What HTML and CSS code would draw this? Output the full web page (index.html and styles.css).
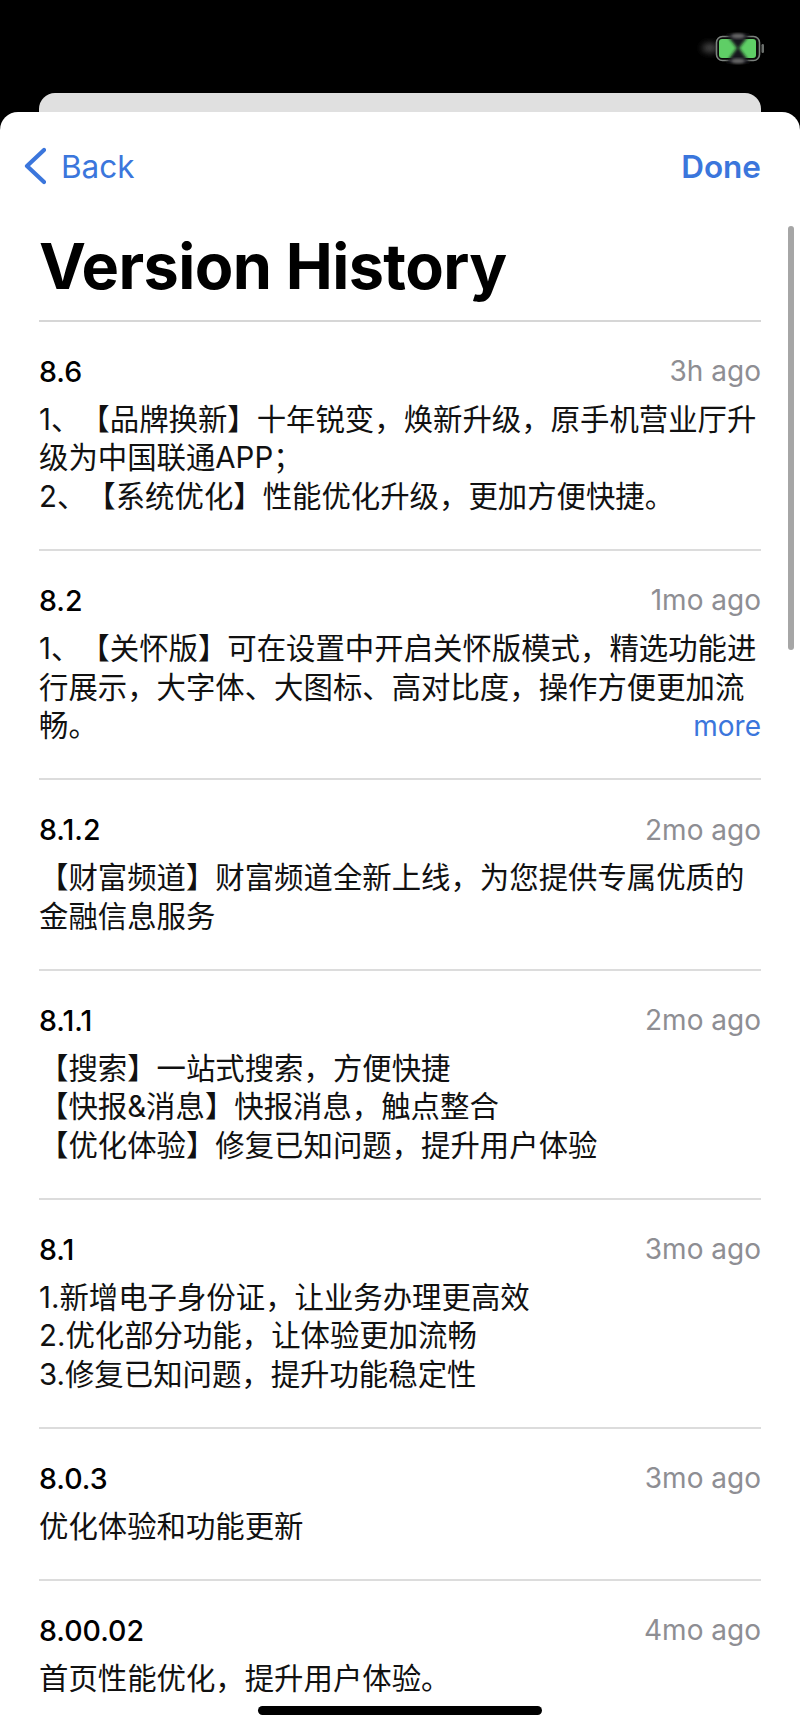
FILE: index.html
```html
<!DOCTYPE html>
<html lang="zh-CN">
<head>
    <meta charset="UTF-8">
    <meta name="viewport" content="width=device-width, initial-scale=1.0">
    <title>Version History</title>
    <link rel="stylesheet" href="styles.css">
</head>
<body>
<div class="status">
    <svg class="battery" width="74" height="38" viewBox="0 0 74 38">
        <defs>
            <filter id="soft" x="-30%" y="-30%" width="160%" height="160%"><feGaussianBlur stdDeviation="1.6"/></filter>
            <filter id="softer" x="-50%" y="-80%" width="200%" height="260%"><feGaussianBlur stdDeviation="3"/></filter>
        </defs>
        <ellipse cx="14" cy="18" rx="8" ry="5" fill="#444" filter="url(#softer)"/>
        <rect x="20.5" y="6.5" width="43" height="24" rx="6" fill="#0a0a0a" stroke="#7c827e" stroke-width="1.6"/>
        <rect x="23" y="9" width="37" height="19" rx="3" fill="#5fce66"/>
        <path d="M30 4 L54 4 L43 18 L54 33 L30 33 L41 18 Z" fill="#14181a" filter="url(#soft)"/>
        <ellipse cx="42" cy="6" rx="7" ry="2.5" fill="#6a6a6a" filter="url(#soft)"/>
        <ellipse cx="42" cy="31" rx="7" ry="2.5" fill="#6a6a6a" filter="url(#soft)"/>
        <rect x="65.5" y="14" width="2.5" height="9" rx="1.2" fill="#6b6f6c"/>
    </svg>
</div>
<div class="peek"></div>

<div class="sheet">
    <div class="nav">
        <a class="back">
            <svg class="chevron" width="22" height="38" viewBox="0 0 22 38"><path d="M20 3 L3 19 L20 35" fill="none" stroke="#3b76dc" stroke-width="4.2" stroke-linecap="round" stroke-linejoin="round"/></svg>
            Back
        </a>
        <a class="done">Done</a>
    </div>

    <h1 class="title">Version History</h1>

    <div class="row">
        <div class="row-head"><span class="version">8.6</span><span class="date">3h ago</span></div>
        <div class="notes">1、【品牌换新】十年锐变，焕新升级，原手机营业厅升级为中国联通APP；<br>2、【系统优化】性能优化升级，更加方便快捷。</div>
    </div>
    <div class="row">
        <div class="row-head"><span class="version">8.2</span><span class="date">1mo ago</span></div>
        <div class="notes">1、【关怀版】可在设置中开启关怀版模式，精选功能进行展示，大字体、大图标、高对比度，操作方便更加流畅。<a class="more">more</a></div>
    </div>
    <div class="row">
        <div class="row-head"><span class="version">8.1.2</span><span class="date">2mo ago</span></div>
        <div class="notes">【财富频道】财富频道全新上线，为您提供专属优质的金融信息服务</div>
    </div>
    <div class="row">
        <div class="row-head"><span class="version">8.1.1</span><span class="date">2mo ago</span></div>
        <div class="notes">【搜索】一站式搜索，方便快捷<br>【快报&amp;消息】快报消息，触点整合<br>【优化体验】修复已知问题，提升用户体验</div>
    </div>
    <div class="row">
        <div class="row-head"><span class="version">8.1</span><span class="date">3mo ago</span></div>
        <div class="notes">1.新增电子身份证，让业务办理更高效<br>2.优化部分功能，让体验更加流畅<br>3.修复已知问题，提升功能稳定性</div>
    </div>
    <div class="row">
        <div class="row-head"><span class="version">8.0.3</span><span class="date">3mo ago</span></div>
        <div class="notes">优化体验和功能更新</div>
    </div>
    <div class="row last">
        <div class="row-head"><span class="version">8.00.02</span><span class="date">4mo ago</span></div>
        <div class="notes">首页性能优化，提升用户体验。</div>
    </div>

    <div class="scrollbar"></div>
    <div class="home-bar"></div>
</div>
</body>
</html>
```

FILE: styles.css
```css
body {
    margin: 0;
    width: 800px;
    height: 1731px;
    overflow: hidden;
    background-color: #000;
    color: #000;
    font-family: Inter, "Noto Sans CJK SC", sans-serif;
    display: flex;
    flex-direction: column;
}

.status {
    flex: none;
    height: 93px;
    display: flex;
    justify-content: flex-end;
    align-items: flex-start;
    padding: 30px 30px 0 0;
    box-sizing: border-box;
}

.battery {
    display: block;
}

.peek {
    flex: none;
    height: 19px;
    margin: 0 39px;
    background-color: #e0e0e0;
    border-radius: 16px 16px 0 0;
}

.sheet {
    position: relative;
    flex: 1;
    min-height: 0;
    background-color: #fff;
    border-radius: 18px 18px 0 0;
    padding: 0 39px;
}

.nav {
    height: 108px;
    display: flex;
    justify-content: space-between;
    align-items: center;
    font-size: 31.5px;
    color: #3b76dc;
}

.back {
    display: flex;
    align-items: center;
    gap: 15px;
    margin-left: -15px;
}

.done {
    font-weight: 600;
}

.title {
    margin: 0;
    height: 102px;
    font-size: 63px;
    line-height: 92px;
    font-weight: 700;
    letter-spacing: -0.6px;
    box-sizing: border-box;
    border-bottom: 2px solid #d6d6d6;
}

.row {
    padding: 29.2px 0 32.4px;
    border-bottom: 2px solid #dcdcdc;
}

.row.last {
    border-bottom: 0;
}

.row-head {
    display: flex;
    justify-content: space-between;
    align-items: center;
    height: 40px;
    margin-bottom: 9.5px;
    font-size: 28px;
}

.version {
    font-size: 28.5px;
    font-weight: 500;
}

.date {
    color: #8e8e93;
}

.notes {
    font-size: 29.4px;
    line-height: 38.7px;
    color: #111;
    text-spacing-trim: space-all;
}

.more {
    float: right;
    font-size: 28px;
    color: #3b76dc;
}

.scrollbar {
    position: absolute;
    right: 6px;
    top: 114px;
    width: 6px;
    height: 424px;
    background-color: #a6a6a6;
    border-radius: 3px;
}

.home-bar {
    position: absolute;
    left: 258px;
    top: 1594px;
    width: 284px;
    height: 9px;
    background-color: #000;
    border-radius: 5px;
}
```
